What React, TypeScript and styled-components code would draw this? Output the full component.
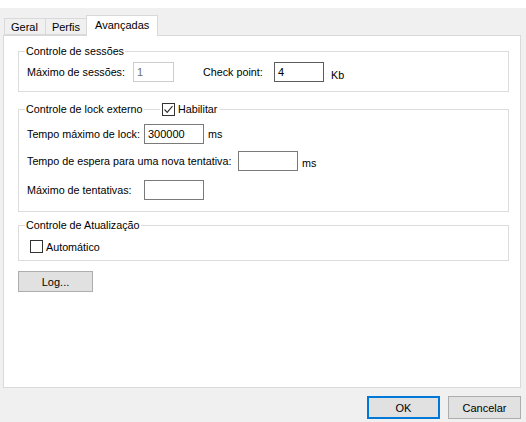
import React from 'react';
import styled, { createGlobalStyle } from 'styled-components';

const GlobalStyle = createGlobalStyle`
  html, body {
    margin: 0;
    padding: 0;
    background: #ffffff;
  }

  body {
    font-family: "Liberation Sans", Arial, sans-serif;
    font-size: 11px;
    color: #000;
  }
`

const Window = styled.div`
  width: 526px;
  height: 422px;
  display: flex;
  flex-direction: column;
  background: #f0f0f0;
  border-top: 8px solid #ffffff;
  box-sizing: border-box;
`

const Body = styled.div`
  padding: 7px 5px 0 3px;
  display: flex;
  flex-direction: column;
`

const TabBar = styled.div`
  display: flex;
  align-items: flex-end;
  height: 20px;
  padding-left: 1px;
`

const Tab = styled.div<{ $active?: boolean }>`
  position: relative;
  box-sizing: border-box;
  height: ${p => (p.$active ? '21px' : '17px')};
  margin-bottom: ${p => (p.$active ? '-1px' : '0')};
  margin-left: ${p => (p.$active ? '-2px' : '-1px')};
  padding: ${p => (p.$active ? '2px 8px 0 8px' : '1px 7px 0 6px')};
  border: 1px solid #d9d9d9;
  border-bottom: ${p => (p.$active ? 'none' : '1px solid #d9d9d9')};
  background: ${p => (p.$active ? '#ffffff' : '#f0f0f0')};
  z-index: ${p => (p.$active ? 1 : 0)};
  line-height: 14px;

  &:first-child {
    margin-left: 0;
  }
`

const Panel = styled.div`
  box-sizing: border-box;
  height: 353px;
  border: 1px solid #d9d9d9;
  background: #ffffff;
  padding: 8px 11px 0 14px;
  display: flex;
  flex-direction: column;
  font-size: 10.75px;
`

const Group = styled.fieldset<{ $top?: number; $bottom?: number }>`
  position: relative;
  margin: ${p => p.$top ?? 0}px 0 0 0;
  padding: 0 6px ${p => p.$bottom ?? 9}px 6px;
  border: 1px solid #dcdcdc;
  min-width: 0;
  display: flex;
  flex-direction: column;
`

const Legend = styled.legend`
  padding: 0 1px;
  line-height: 14px;
  height: 14px;
`

// checkbox that sits on the group's top border, next to its caption
const HeaderToggle = styled.div`
  position: absolute;
  left: 141px;
  top: -14px;
  padding: 0 3px 0 2px;
  background: #ffffff;
  line-height: 14px;
`

const Row = styled.div<{ $top?: number; $indent?: number }>`
  display: flex;
  align-items: center;
  margin-top: ${p => p.$top ?? 0}px;
  padding-left: ${p => p.$indent ?? 2}px;
`

const Label = styled.span<{ $width?: number; $gap?: number }>`
  width: ${p => (p.$width ? `${p.$width}px` : 'auto')};
  margin-left: ${p => p.$gap ?? 0}px;
  flex-shrink: 0;
  white-space: nowrap;
`

const Unit = styled.span<{ $drop?: number }>`
  margin-left: 4px;
  position: relative;
  top: ${p => p.$drop ?? 0}px;
`

const Field = styled.input<{ $width: number; $tone?: 'disabled' | 'focus' }>`
  box-sizing: border-box;
  width: ${p => p.$width}px;
  height: 20px;
  padding: 0 3px;
  margin: 0;
  font-family: "Liberation Sans", Arial, sans-serif;
  font-size: 11px;
  background: #ffffff;
  color: ${p => (p.$tone === 'disabled' ? '#6d6d6d' : '#000')};
  border: 1px solid
    ${p =>
      p.$tone === 'disabled' ? '#cccccc' : p.$tone === 'focus' ? '#5c5c5c' : '#7a7a7a'};
  outline: none;
`

const CheckWrap = styled.label`
  display: flex;
  align-items: center;
  gap: 3px;
`

const Box = styled.span`
  box-sizing: border-box;
  width: 13px;
  height: 13px;
  border: 1px solid #333333;
  background: #ffffff;
  display: flex;
  align-items: center;
  justify-content: center;
`

const Button = styled.button<{ $primary?: boolean; $width?: number }>`
  box-sizing: border-box;
  width: ${p => p.$width ?? 75}px;
  height: ${p => (p.$primary !== undefined ? 23 : 21)}px;
  background: #e1e1e1;
  border: ${p => (p.$primary ? '2px solid #0078d7' : '1px solid #adadad')};
  font-family: "Liberation Sans", Arial, sans-serif;
  font-size: 11px;
  color: #000;
  padding: 0;
  margin: 0;
`

const LogButton = styled(Button)`
  margin-top: 10px;
  align-self: flex-start;
`

const Footer = styled.div`
  display: flex;
  justify-content: flex-end;
  gap: 8px;
  padding: 8px 5px 0 0;
`

const Checkbox: React.FC<{ checked?: boolean; label: string }> = ({ checked, label }) => (
  <CheckWrap>
    <Box>
      {checked && (
        <svg width="11" height="11" viewBox="0 0 11 11">
          <path d="M1.5 5.5 L4.2 8.3 L9.5 2.2" fill="none" stroke="#333" strokeWidth="1.2" />
        </svg>
      )}
    </Box>
    <span>{label}</span>
  </CheckWrap>
)

const App: React.FC = () => {
  return (
    <Window>
      <GlobalStyle />
      <Body>
        <TabBar>
          <Tab>Geral</Tab>
          <Tab>Perfis</Tab>
          <Tab $active>Avançadas</Tab>
        </TabBar>

        <Panel>
          <Group $bottom={9}>
            <Legend>Controle de sessões</Legend>
            <Row $top={4}>
              <Label $width={106}>Máximo de sessões:</Label>
              <Field $width={41} $tone="disabled" value="1" readOnly />
              <Label $width={71} $gap={29}>Check point:</Label>
              <Field $width={50} $tone="focus" value="4" readOnly />
              <Unit $drop={3}>&nbsp;Kb</Unit>
            </Row>
          </Group>

          <Group $top={10} $bottom={11}>
            <Legend>Controle de lock externo</Legend>
            <HeaderToggle>
              <Checkbox checked label="Habilitar" />
            </HeaderToggle>
            <Row $top={8}>
              <Label $width={117}>Tempo máximo de lock:</Label>
              <Field $width={60} value="300000" readOnly />
              <Unit>ms</Unit>
            </Row>
            <Row $top={7}>
              <Label $width={211}>Tempo de espera para uma nova tentativa:</Label>
              <Field $width={60} value="" readOnly />
              <Unit $drop={2}>ms</Unit>
            </Row>
            <Row $top={9}>
              <Label $width={117}>Máximo de tentativas:</Label>
              <Field $width={60} value="" readOnly />
            </Row>
          </Group>

          <Group $top={6} $bottom={7}>
            <Legend>Controle de Atualização</Legend>
            <Row $top={8} $indent={5}>
              <Checkbox label="Automático" />
            </Row>
          </Group>

          <LogButton>Log...</LogButton>
        </Panel>
      </Body>

      <Footer>
        <Button $primary $width={73}>OK</Button>
        <Button $primary={false} $width={73}>Cancelar</Button>
      </Footer>
    </Window>
  );
}

export default App;
